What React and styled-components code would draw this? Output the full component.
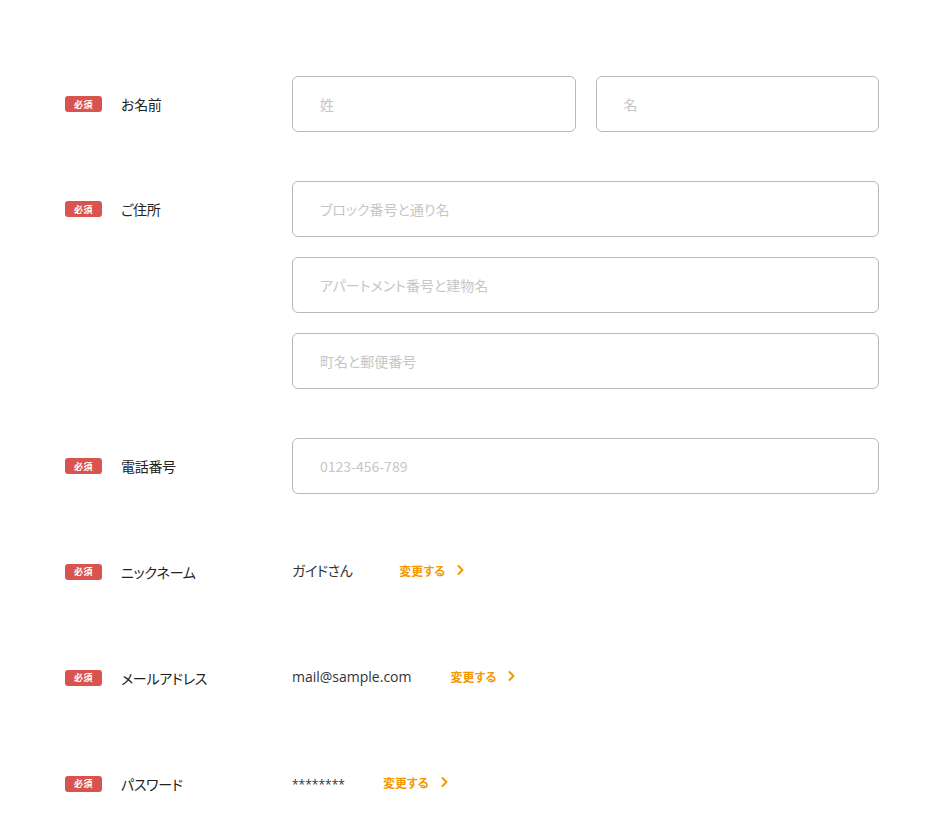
import React from "react";
import styled, { createGlobalStyle } from "styled-components";

const Global = createGlobalStyle`
  html, body { margin: 0; padding: 0; background: #fff; }
  body {
    font-family: "Noto Sans CJK JP", "Noto Sans", sans-serif;
    font-feature-settings: "palt";
    color: #333;
  }
  * { box-sizing: border-box; }
`;

const Form = styled.form`
  display: flex;
  flex-direction: column;
  gap: 49px;
  padding: 76px 0 40px 65px;
  width: 879px;
`;

const Row = styled.div`
  display: grid;
  grid-template-columns: 227px 1fr;
  align-items: ${(p) => (p.$top ? "start" : "center")};
  min-height: ${(p) => (p.$text ? "57px" : "0")};
`;

const LabelCell = styled.div`
  display: flex;
  align-items: center;
  gap: 19px;
  height: 56px;
`;

const Badge = styled.span`
  display: inline-flex;
  align-items: center;
  justify-content: center;
  width: 37px;
  height: 16px;
  border-radius: 3px;
  background: #d9534f;
  color: #fff;
  font-size: 9px;
  font-weight: 700;
  letter-spacing: 0.5px;
`;

const Label = styled.span`
  font-size: 14px;
  color: #222;
  letter-spacing: -0.3px;
`;

const Fields = styled.div`
  display: ${(p) => (p.$split ? "grid" : "flex")};
  grid-template-columns: 1fr 1fr;
  flex-direction: column;
  gap: 20px;
`;

const Input = styled.input`
  width: 100%;
  height: 56px;
  border: 1px solid #b8b8b8;
  border-radius: 6px;
  padding: 0 27px;
  font-family: inherit;
  font-feature-settings: "palt";
  font-size: 14px;
  color: #333;
  background: #fff;
  outline: none;
  &::placeholder { color: #c6c6c6; }
`;

const ValueLine = styled.div`
  display: flex;
  align-items: center;
  gap: ${(p) => p.$gap}px;
  margin-top: -3px;
`;

const Value = styled.span`
  font-size: ${(p) => p.$size || 14}px;
  color: #333;
  letter-spacing: ${(p) => (p.$latin ? "0" : "-0.4px")};
  font-family: ${(p) => (p.$latin ? '"Open Sans", "Noto Sans CJK JP", sans-serif' : "inherit")};
  ${(p) => (p.$size ? "margin-top: 4px;" : "")}
`;

const ChangeLink = styled.a`
  display: inline-flex;
  align-items: center;
  gap: 11px;
  color: #f39800;
  font-size: 12px;
  font-weight: 700;
  text-decoration: none;
  cursor: pointer;
`;

const Chevron = () => (
  <svg width="9" height="12" viewBox="0 0 9 12" fill="none">
    <path d="M2.5 2 L6.5 6 L2.5 10" stroke="#f39800" strokeWidth="2" strokeLinecap="round" strokeLinejoin="round" />
  </svg>
);

const Required = ({ label }) => (
  <LabelCell>
    <Badge>必須</Badge>
    <Label>{label}</Label>
  </LabelCell>
);

export default function App() {
  return (
    <>
      <Global />
      <Form onSubmit={(e) => e.preventDefault()}>
        <Row>
          <Required label="お名前" />
          <Fields $split>
            <Input placeholder="姓" />
            <Input placeholder="名" />
          </Fields>
        </Row>
        <Row $top>
          <Required label="ご住所" />
          <Fields>
            <Input placeholder="ブロック番号と通り名" />
            <Input placeholder="アパートメント番号と建物名" />
            <Input placeholder="町名と郵便番号" />
          </Fields>
        </Row>
        <Row>
          <Required label="電話番号" />
          <Fields>
            <Input placeholder="0123-456-789" />
          </Fields>
        </Row>
        <Row $text>
          <Required label="ニックネーム" />
          <ValueLine $gap={47}>
            <Value>ガイドさん</Value>
            <ChangeLink>変更する<Chevron /></ChangeLink>
          </ValueLine>
        </Row>
        <Row $text>
          <Required label="メールアドレス" />
          <ValueLine $gap={39}>
            <Value $latin>mail@sample.com</Value>
            <ChangeLink>変更する<Chevron /></ChangeLink>
          </ValueLine>
        </Row>
        <Row $text>
          <Required label="パスワード" />
          <ValueLine $gap={38}>
            <Value $latin $size={12}>********</Value>
            <ChangeLink>変更する<Chevron /></ChangeLink>
          </ValueLine>
        </Row>
      </Form>
    </>
  );
}
